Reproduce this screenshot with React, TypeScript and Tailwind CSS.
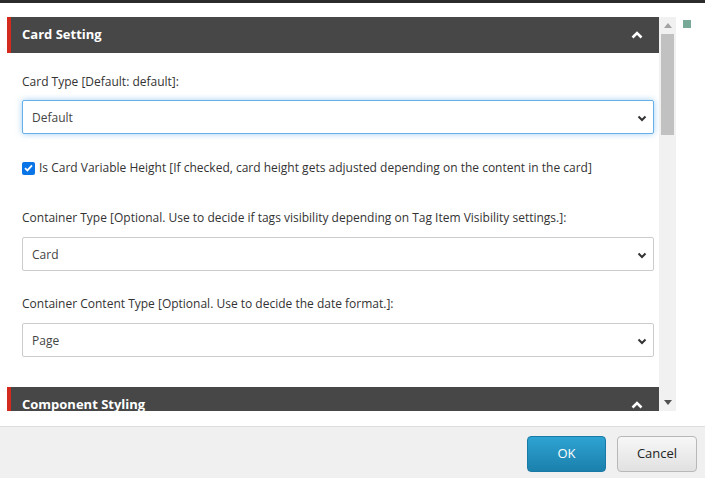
import React from 'react'

const font = { fontFamily: '"Open Sans", "Liberation Sans", sans-serif' }

function CaretUp() {
  return (
    <svg width="12" height="8" viewBox="0 0 12 8" className="block">
      <path d="M1.5 6.5 L6 2 L10.5 6.5" fill="none" stroke="#fff" strokeWidth="2.6" strokeLinejoin="miter" />
    </svg>
  )
}

function CaretDown() {
  return (
    <svg width="10" height="7" viewBox="0 0 10 7" className="block">
      <path d="M1.5 1.5 L5 5 L8.5 1.5" fill="none" stroke="#333" strokeWidth="2" />
    </svg>
  )
}

function SectionHeader({ title }: { title: string }) {
  return (
    <div className="h-[36px] shrink-0 bg-[#474747] border-l-4 border-[#d42a1e] flex items-center justify-between pl-[11px] pr-[16px]">
      <span className="text-white font-bold text-[13px]">{title}</span>
      <CaretUp />
    </div>
  )
}

function Select({ value, focus }: { value: string; focus?: boolean }) {
  const cls = focus
    ? 'border-[#66afe9] shadow-[0_0_6px_rgba(102,175,233,0.6)]'
    : 'border-[#cccccc]'
  return (
    <div className={`h-[34px] border rounded-[2px] bg-white flex items-center justify-between pl-[9px] pr-[6px] pt-[2px] text-[12px] text-[#444] ${cls}`}>
      <span>{value}</span>
      <CaretDown />
    </div>
  )
}

export default function App() {
  return (
    <div className="w-[705px] h-[478px] bg-white flex flex-col overflow-hidden" style={font}>
      <div className="h-[3px] bg-[#2b2b2b] shrink-0" />
      <div className="flex flex-1 min-h-0">
        <div className="ml-[7px] mt-[14px] w-[669px] h-[394px] flex overflow-hidden">
          <div className="w-[652px] flex flex-col overflow-hidden">
            <SectionHeader title="Card Setting" />
            <div className="pl-[15px] pr-[5px] pt-[21px] text-[12px] text-[#333] shrink-0">
              <div className="leading-[16px]">Card Type [Default: default]:</div>
              <div className="mt-[10px]">
                <Select value="Default" focus />
              </div>
              <div className="mt-[26px] flex items-center h-[16px]">
                <span className="w-[13px] h-[13px] rounded-[2px] bg-[#0a75e6] flex items-center justify-center">
                  <svg width="9" height="8" viewBox="0 0 9 8">
                    <path d="M1 4.2 L3.4 6.4 L8 1.3" fill="none" stroke="#fff" strokeWidth="1.8" />
                  </svg>
                </span>
                <span className="ml-[4px]">Is Card Variable Height [If checked, card height gets adjusted depending on the content in the card]</span>
              </div>
              <div className="mt-[34px] leading-[16px]">Container Type [Optional. Use to decide if tags visibility depending on Tag Item Visibility settings.]:</div>
              <div className="mt-[11px]">
                <Select value="Card" />
              </div>
              <div className="mt-[25px] leading-[16px]">Container Content Type [Optional. Use to decide the date format.]:</div>
              <div className="mt-[11px]">
                <Select value="Page" />
              </div>
            </div>
            <div className="mt-[30px]">
              <SectionHeader title="Component Styling" />
            </div>
          </div>
          <div className="w-[17px] h-full bg-[#f1f1f1] flex flex-col items-center">
            <div className="h-[17px] flex items-center justify-center">
              <svg width="8" height="5" viewBox="0 0 8 5"><path d="M0 5 L4 0 L8 5 Z" fill="#a3a3a3" /></svg>
            </div>
            <div className="w-[13px] h-[101px] bg-[#c1c1c1]" />
            <div className="flex-1" />
            <div className="h-[17px] flex items-center justify-center">
              <svg width="8" height="5" viewBox="0 0 8 5"><path d="M0 0 L8 0 L4 5 Z" fill="#505050" /></svg>
            </div>
          </div>
        </div>
        <div className="ml-[7px] mt-[17px] w-[8px] h-[8px] bg-[#76a997]" />
      </div>
      <div className="h-[52px] shrink-0 bg-[#f0f0f0] border-t border-[#dedede] flex items-start justify-end pt-[9px] pr-[8px] gap-[11px]">
        <button className="w-[79px] h-[36px] rounded-[4px] border border-[#1a7aa6] bg-gradient-to-b from-[#2ea3d3] to-[#1b80ac] text-white text-[13px]">OK</button>
        <button className="w-[80px] h-[36px] rounded-[4px] border border-[#b8b8b8] bg-gradient-to-b from-[#f7f7f7] to-[#e1e1e1] text-[#222] text-[13px]">Cancel</button>
      </div>
    </div>
  )
}
